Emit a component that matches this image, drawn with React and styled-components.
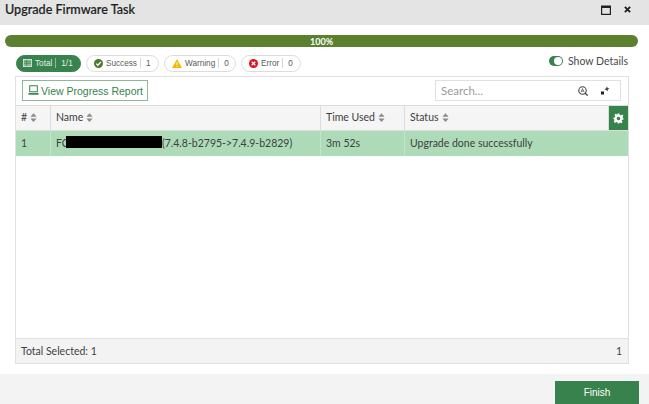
import styled, { createGlobalStyle } from "styled-components";

const Global = createGlobalStyle`
    html, body { margin: 0; padding: 0; background: #fff; }
    * { box-sizing: border-box; }
`;

const Dialog = styled.div`
    width: 649px;
    height: 404px;
    display: flex;
    flex-direction: column;
    overflow: hidden;
    font-family: Lato, sans-serif;
    color: #3f3f3f;
    font-size: 10.5px;
`;

const Header = styled.div`
    height: 25px;
    flex: none;
    background: #e4e4e4;
    display: flex;
    align-items: center;
    justify-content: space-between;
    padding: 0 18px 6px 5px;
    h1 {
        margin: 0;
        font-size: 12.6px;
        font-weight: 500;
        color: #1f1f1f;
        -webkit-text-stroke: 0.2px #1f1f1f;
    }
`;

const HeaderIcons = styled.div`
    display: flex;
    align-items: center;
    gap: 13px;
`;

const Body = styled.div`
    flex: 1;
    min-height: 0;
    padding: 10px 11px 10px 5px;
    display: flex;
    flex-direction: column;
`;

const Progress = styled.div`
    height: 12px;
    flex: none;
    border-radius: 6px;
    background: #5a8030;
    color: #fff;
    font-size: 9px;
    font-weight: 700;
    display: flex;
    align-items: center;
    justify-content: center;
`;

const StatusRow = styled.div`
    display: flex;
    align-items: center;
    margin: 8px 10px 5px 11px;
    gap: 5px;
    height: 16px;
    flex: none;
`;

const Pill = styled.div`
    height: 17px;
    width: ${(p) => p.$w}px;
    border-radius: 9px;
    border: 1px solid ${(p) => (p.$active ? "#37824d" : "#dcdcdc")};
    background: ${(p) => (p.$active ? "#37824d" : "#fff")};
    color: ${(p) => (p.$active ? "#e6f0e8" : "#5a5a5a")};
    display: flex;
    align-items: center;
    padding-left: ${(p) => (p.$active ? 6 : 7)}px;
    font-family: "Liberation Sans", sans-serif;
    font-size: 8.2px;
    white-space: nowrap;
    svg {
        flex: none;
        margin-right: 3px;
    }
    i {
        font-style: normal;
        flex: none;
        width: 1px;
        height: 10px;
        margin: 0 5px 0 3px;
        background: ${(p) => (p.$active ? "#8dbb9a" : "#d6d6d6")};
    }
`;

const Toggle = styled.div`
    margin-left: auto;
    display: flex;
    align-items: center;
    gap: 5px;
    font-size: 10.5px;
    color: #4a4a4a;
    margin-top: -4px;
`;

const Switch = styled.div`
    width: 14px;
    height: 10px;
    border-radius: 5px;
    background: #37824d;
    display: flex;
    align-items: center;
    justify-content: flex-end;
    padding-right: 1px;
    &::after {
        content: "";
        width: 8px;
        height: 8px;
        border-radius: 50%;
        background: #fff;
    }
`;

const Grid = styled.div`
    flex: 1;
    min-height: 0;
    margin: 0 9px 0 10px;
    border: 1px solid #e0e0e0;
    display: flex;
    flex-direction: column;
`;

const Toolbar = styled.div`
    height: 28px;
    flex: none;
    display: flex;
    align-items: flex-start;
    justify-content: space-between;
    padding: 3px 7px 0 6px;
`;

const ReportButton = styled.button`
    width: 126px;
    height: 21px;
    border: 1px solid #8cb998;
    background: #fff;
    color: #37824d;
    font-family: "Liberation Sans", sans-serif;
    font-size: 10.5px;
    white-space: nowrap;
    display: flex;
    align-items: center;
    gap: 2px;
    padding: 0 0 0 5px;
    svg {
        flex: none;
    }
`;

const Search = styled.div`
    width: 186px;
    height: 21px;
    border: 1px solid #e0e0e0;
    display: flex;
    align-items: center;
    padding: 0 10px 0 5px;
    color: #9a9a9a;
    font-size: 11.5px;
    span {
        flex: 1;
    }
`;

const Row = styled.div`
    display: grid;
    grid-template-columns: 35px 270px 84px 204px 19px;
    height: ${(p) => p.$h}px;
    flex: none;
    background: ${(p) => p.$bg};
    border-top: ${(p) => (p.$head ? "1px solid #dcdcdc" : "none")};
    border-bottom: ${(p) => (p.$head ? "1px solid #dcdcdc" : "none")};
`;

const Cell = styled.div`
    display: flex;
    align-items: center;
    padding: 0 0 2px 5px;
    gap: 3px;
    white-space: nowrap;
    font-size: 10.5px;
    color: #404040;
    border-right: ${(p) => (p.$last ? "none" : `1px solid ${p.$line}`)};
    svg {
        flex: none;
    }
`;

const Redacted = styled.span`
    display: inline-block;
    vertical-align: -1px;
    width: 96px;
    height: 12px;
    background: #000;
    margin-left: -3px;
`;

const GearCell = styled.div`
    background: #37824d;
    display: flex;
    align-items: center;
    justify-content: center;
`;

const Empty = styled.div`
    flex: 1;
    min-height: 0;
`;

const GridFooter = styled.div`
    height: 25px;
    flex: none;
    background: #f3f3f3;
    border-top: 1px solid #e0e0e0;
    display: flex;
    align-items: center;
    justify-content: space-between;
    padding: 0 6px 0 5px;
    font-size: 10.5px;
`;

const Footer = styled.div`
    height: 30px;
    flex: none;
    background: #f3f3f3;
    display: flex;
    align-items: flex-end;
    justify-content: flex-end;
    padding-right: 10px;
`;

const Finish = styled.button`
    width: 84px;
    height: 23px;
    border: none;
    background: #37824d;
    color: #fff;
    font-family: "Liberation Sans", sans-serif;
    font-size: 10px;
    padding: 0;
`;

const Sort = () => (
    <svg width="7" height="9" viewBox="0 0 8 10">
        <path d="M4 0 L7.5 4 H0.5Z M4 10 L0.5 6 H7.5Z" fill="#8a8a8a" />
    </svg>
);

const columns = ["#", "Name", "Time Used", "Status"];

const App = () => {
    return (
        <>
            <Global />
            <Dialog>
                <Header>
                    <h1>Upgrade Firmware Task</h1>
                    <HeaderIcons>
                        <svg width="10" height="10" viewBox="0 0 10 10">
                            <path d="M0 0.5 H10 V10 H0Z M1.2 3 V8.8 H8.8 V3Z" fill="#222" fillRule="evenodd" />
                        </svg>
                        <svg width="7" height="7" viewBox="0 0 8 8">
                            <path d="M1 1 L7 7 M7 1 L1 7" stroke="#222" strokeWidth="2.2" />
                        </svg>
                    </HeaderIcons>
                </Header>
                <Body>
                    <Progress>100%</Progress>
                    <StatusRow>
                        <Pill $active $w={65}>
                            <svg width="9" height="8" viewBox="0 0 10 9">
                                <rect x="0.5" y="0.5" width="9" height="8" fill="#8cb998" stroke="#d5e6da" />
                                <path d="M4 1 V8 M1 3 H9 M1 5 H9" stroke="#37824d" strokeWidth="0.7" />
                            </svg>
                            Total<i />1/1
                        </Pill>
                        <Pill $w={73}>
                            <svg width="9" height="9" viewBox="0 0 9 9">
                                <circle cx="4.5" cy="4.5" r="4.5" fill="#4d7a32" />
                                <path d="M2.2 4.6 L3.9 6.2 L6.8 3" stroke="#fff" strokeWidth="1.3" fill="none" />
                            </svg>
                            Success<i />1
                        </Pill>
                        <Pill $w={72}>
                            <svg width="10" height="9" viewBox="0 0 11 10">
                                <path d="M5.5 0 L11 10 H0Z" fill="#f5b900" />
                                <path d="M5.5 3.5 V6.8 M5.5 7.7 V8.9" stroke="#fff" strokeWidth="1" />
                            </svg>
                            Warning<i />0
                        </Pill>
                        <Pill $w={60}>
                            <svg width="9" height="9" viewBox="0 0 10 10">
                                <circle cx="5" cy="5" r="5" fill="#e0101e" />
                                <path d="M3 3 L7 7 M7 3 L3 7" stroke="#fff" strokeWidth="1.4" />
                            </svg>
                            Error<i />0
                        </Pill>
                        <Toggle>
                            <Switch />
                            Show Details
                        </Toggle>
                    </StatusRow>
                    <Grid>
                        <Toolbar>
                            <ReportButton>
                                <svg width="11" height="11" viewBox="0 0 13 12">
                                    <path d="M2 0.5 H11 V7.5 H2Z" fill="none" stroke="#37824d" strokeWidth="1.2" />
                                    <path d="M0.5 9 H12.5 V11 H0.5Z" fill="#37824d" />
                                </svg>
                                View Progress Report
                            </ReportButton>
                            <Search>
                                <span>Search...</span>
                                <svg width="10" height="10" viewBox="0 0 10 10" style={{ marginRight: 13 }}>
                                    <circle cx="4.5" cy="4.5" r="3.7" fill="none" stroke="#444" strokeWidth="1.1" />
                                    <path d="M7.2 7.2 L9.6 9.6" stroke="#444" strokeWidth="1.3" />
                                    <path d="M3 6.2 L4.5 2.6 L6 6.2 M3.6 5 H5.4" stroke="#444" strokeWidth="0.7" fill="none" />
                                </svg>
                                <svg width="9" height="9" viewBox="0 0 9 9">
                                    <rect x="0" y="5.5" width="3" height="3" fill="#222" />
                                    <path d="M6 0.5 L6.7 2 L8.5 2.6 L6.9 3.6 L6.5 5.2 L5.2 3.9 L3.6 3.8 L4.8 2.4Z" fill="#444" />
                                </svg>
                            </Search>
                        </Toolbar>
                        <Row $head $h={26} $bg="#f5f5f5">
                            {columns.map((name) => (
                                <Cell key={name} $line="#dcdcdc">
                                    {name}
                                    <Sort />
                                </Cell>
                            ))}
                            <GearCell>
                                <svg width="11" height="11" viewBox="0 0 24 24">
                                    <path
                                        fill="#fff"
                                        fillRule="evenodd"
                                        d="M10 1 H14 L14.6 4.2 L17 5.2 L19.8 3.4 L22.6 6.2 L20.8 9 L21.8 11.4 L23 12 V14 L20 14.6 L19 17 L20.8 19.8 L18 22.6 L15.2 20.8 L14 21.4 L13.6 23 H10.4 L9.8 20.8 L7.2 19.8 L4.4 21.6 L1.6 18.8 L3.4 16 L2.4 13.6 L1 13 V10 L3.8 9.6 L4.8 7.2 L3 4.4 L5.8 1.6 L8.6 3.4 L9.6 3Z M12 8 A4 4 0 1 0 12 16 A4 4 0 1 0 12 8Z"
                                    />
                                </svg>
                            </GearCell>
                        </Row>
                        <Row $h={25} $bg="#addbb7">
                            <Cell $line="#c3e5ca">1</Cell>
                            <Cell $line="#c3e5ca">
                                <span>
                                    FC
                                    <Redacted />
                                    (7.4.8-b2795-&gt;7.4.9-b2829)
                                </span>
                            </Cell>
                            <Cell $line="#c3e5ca">3m 52s</Cell>
                            <Cell $last>Upgrade done successfully</Cell>
                        </Row>
                        <Empty />
                        <GridFooter>
                            <span>Total Selected: 1</span>
                            <span>1</span>
                        </GridFooter>
                    </Grid>
                </Body>
                <Footer>
                    <Finish>Finish</Finish>
                </Footer>
            </Dialog>
        </>
    );
};

export default App;
